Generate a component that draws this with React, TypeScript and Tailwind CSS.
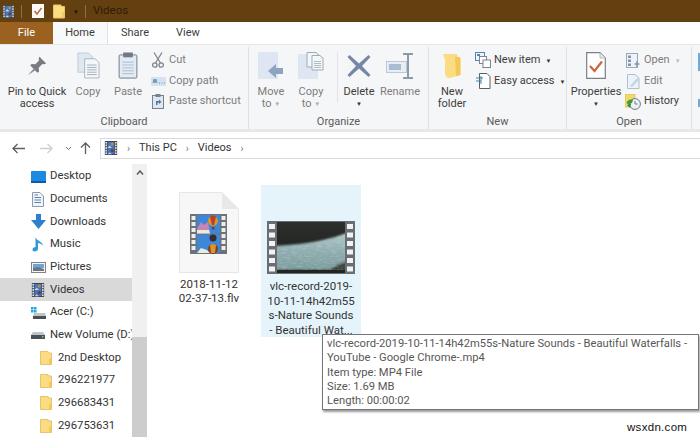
import React from "react";

const FONT = "font-['Roboto','Noto_Sans',sans-serif]";

// film strip icon used for the video library / title bar
function FilmIcon({ size = 16 }: { size?: number }) {
  const holes = [1, 4, 7, 10, 13];
  return (
    <svg width={size} height={size} viewBox="0 0 16 16" className="shrink-0">
      <rect x="1" y="0" width="14" height="16" fill="#3a3f46" />
      {holes.map((y) => (
        <React.Fragment key={y}>
          <rect x="1.6" y={y} width="1.8" height="2" fill="#e4e6e8" />
          <rect x="12.6" y={y} width="1.8" height="2" fill="#e4e6e8" />
        </React.Fragment>
      ))}
      <rect x="4" y="1" width="8" height="7" fill="#3f78c8" />
      <rect x="4" y="8" width="8" height="7" fill="#3f78c8" />
      <circle cx="9.5" cy="3.5" r="1.8" fill="#c98a2e" />
      <circle cx="9.5" cy="11" r="1.8" fill="#7c3a24" />
      <path d="M4 8 L6.5 5 L9 8Z M4 15 L6.5 13 L9 15Z" fill="#d9d2cf" />
    </svg>
  );
}

function FolderIcon({ w = 12, h = 14 }: { w?: number; h?: number }) {
  return (
    <svg width={w} height={h} viewBox="0 0 12 14" className="shrink-0">
      <path d="M0.5 0.5 H8 L8.5 2 H11.5 V13.5 H0.5Z" fill="#fbdc82" stroke="#e7c36a" />
      <path d="M9 8 L11.5 7 V13.5 H9Z" fill="#f2c95c" />
    </svg>
  );
}

function PinIcon() {
  return (
    <svg width="20" height="20" viewBox="0 0 24 24">
      <path d="M15 1 L23 9 L20.5 10 L18.5 9.5 L14 14 L14.5 18.5 L12.5 20 L4 11.5 L5.5 9.5 L10 10 L14.5 5.5 L14 3Z" fill="#777c83" />
      <path d="M8 15 L1 23 L10 17Z" fill="#8d9197" />
    </svg>
  );
}

function CopyIcon() {
  return (
    <svg width="23" height="27" viewBox="0 0 24 28">
      <path d="M1 1 H12 L16 5 V21 H1Z" fill="#dfe8f2" stroke="#bccada" />
      <path d="M8 7 H19 L23 11 V27 H8Z" fill="#f4f7fa" stroke="#a9b3bd" />
      {[13, 15.5, 18, 20.5, 23].map((y) => (
        <rect key={y} x="10.5" y={y} width="10" height="1" fill="#a4aeb9" />
      ))}
    </svg>
  );
}

function PasteIcon() {
  return (
    <svg width="20" height="27" viewBox="0 0 20 28">
      <rect x="0.8" y="3" width="18.4" height="24" rx="1" fill="#e3ebf4" stroke="#6f7a87" />
      <rect x="5" y="0.5" width="10" height="5" fill="#6f7a87" />
      {[10, 13, 16, 19, 22].map((y) => (
        <rect key={y} x="4" y={y} width="12" height="1" fill="#a9bbcf" />
      ))}
    </svg>
  );
}

function CutIcon() {
  return (
    <svg width="12" height="16" viewBox="0 0 12 16" fill="none" stroke="#7f858d" strokeWidth="1.3">
      <path d="M2 0.5 L8.5 11 M10 0.5 L3.5 11" />
      <circle cx="2.8" cy="13" r="2.2" />
      <circle cx="9.2" cy="13" r="2.2" />
    </svg>
  );
}

function CopyPathIcon() {
  return (
    <svg width="15" height="9" viewBox="0 0 15 9">
      <rect width="15" height="9" fill="#d4e2f1" />
      <path d="M2 6 L3 2 L4 6 L5 2 L6 6 M8 6 H9 M10.5 6 H11.5 M13 6 H14" stroke="#6a87a8" strokeWidth="0.9" fill="none" />
    </svg>
  );
}

function PasteShortcutIcon() {
  return (
    <svg width="12" height="15" viewBox="0 0 12 15">
      <rect x="0.5" y="1.5" width="11" height="13" fill="#dfe8f2" stroke="#78828e" />
      <rect x="3.5" y="0" width="5" height="3" fill="#78828e" />
      <path d="M4 11 V7 H7 V5.5 L9.5 8 L7 10 V8.8 H5.5 V11Z" fill="#5d7690" />
    </svg>
  );
}

function MoveToIcon() {
  return (
    <svg width="26" height="28" viewBox="0 0 26 28">
      <rect x="0" y="0" width="20" height="27" fill="#dde6f2" />
      <path d="M10 19 L18 12 V16 H25 V22 H18 V26Z" fill="#8ea3bf" />
    </svg>
  );
}

function CopyToIcon() {
  return (
    <svg width="26" height="28" viewBox="0 0 26 28">
      <rect x="0" y="2" width="20" height="25" fill="#dde6f2" />
      <path d="M9 0.5 H18 L21 3 V15 H9Z" fill="#f4f7fa" stroke="#9faab6" />
      <path d="M14 3.5 H22 L25 6 V18 H14Z" fill="#f4f7fa" stroke="#9faab6" />
      {[9, 11, 13, 15].map((y) => (
        <rect key={y} x="16" y={y} width="7" height="0.8" fill="#9faab6" />
      ))}
    </svg>
  );
}

function DeleteIcon() {
  return (
    <svg width="24" height="24" viewBox="0 0 24 24">
      <path d="M2.5 1 L12 9.5 L21.5 1 L23.5 3 L15 12 L23.5 21 L21.5 23 L12 14.5 L2.5 23 L0.5 21 L9 12 L0.5 3Z" fill="#7487a6" />
    </svg>
  );
}

function RenameIcon() {
  return (
    <svg width="28" height="26" viewBox="0 0 28 26">
      <rect x="0.5" y="8.5" width="20" height="11" fill="#e6edf5" stroke="#bcc8d6" />
      <rect x="3" y="11" width="12" height="6" fill="#a9bcd2" />
      <path d="M17 1 H27 M22 1 V25 M17 25 H27" stroke="#8e9aa8" strokeWidth="2" fill="none" />
    </svg>
  );
}

function NewFolderIcon() {
  return (
    <svg width="18" height="26" viewBox="0 0 18 26">
      <path d="M0 1 H14 L15 5 H18 V22 L7 25 Q2 25 2 20 L2 7Z" fill="#fbdc82" />
      <path d="M12 4 H17 V22 L13 23Z" fill="#f3c75a" />
    </svg>
  );
}

function NewItemIcon() {
  return (
    <svg width="16" height="16" viewBox="0 0 16 16">
      <rect x="0.5" y="0.5" width="9" height="8" fill="#eef4fa" stroke="#4f87b5" />
      <rect x="2" y="2" width="3" height="2" fill="#4f87b5" />
      <rect x="4.5" y="4.5" width="7" height="7" fill="#fff" stroke="#7c848d" />
      <rect x="8" y="8" width="7.5" height="7.5" fill="#fff" stroke="#7c848d" />
    </svg>
  );
}

function EasyAccessIcon() {
  return (
    <svg width="16" height="16" viewBox="0 0 16 16">
      <path d="M4.5 0.5 H12 L15 3.5 V15.5 H4.5Z" fill="#fff" stroke="#5b6067" />
      <path d="M1 5 H8 M1 8 H6" stroke="#3f86b8" strokeWidth="1.2" />
      <path d="M6 3 V11" stroke="#3f86b8" />
    </svg>
  );
}

function PropertiesIcon() {
  return (
    <svg width="20" height="27" viewBox="0 0 20 27">
      <path d="M0.7 0.7 H14 L19.3 6 V26.3 H0.7Z" fill="#fff" stroke="#7b7f85" strokeWidth="1.2" />
      <path d="M14 0.7 V6 H19.3" fill="#e9ecef" stroke="#b3b7bc" />
      <path d="M4 14 L8.5 19 L16 9.5" fill="none" stroke="#c96a3d" strokeWidth="2.2" />
    </svg>
  );
}

function OpenSmallIcon() {
  return (
    <svg width="14" height="15" viewBox="0 0 14 15">
      <rect x="0.5" y="0.5" width="11" height="14" fill="#eef3f8" stroke="#9aa9ba" />
      {[2.5, 6.5, 10.5].map((y) => (
        <rect key={y} x="2" y={y} width="3" height="2.5" fill="#7f96b0" />
      ))}
      <path d="M11 8 V14 M8.5 11 H13.5" stroke="#7f96b0" strokeWidth="1.5" />
    </svg>
  );
}

function EditIcon() {
  return (
    <svg width="13" height="15" viewBox="0 0 13 15">
      <path d="M0.5 0.5 H8 L12 4 V14.5 H0.5Z" fill="#edf3f9" stroke="#b0bfce" />
      <path d="M3 12 L10 4 L12 6 L5 13Z" fill="#c4d4e6" />
    </svg>
  );
}

function HistoryIcon() {
  return (
    <svg width="16" height="16" viewBox="0 0 16 16">
      <rect x="0" y="0" width="10" height="13" fill="#f4d76b" stroke="#d1b14a" strokeWidth="0.6" />
      <circle cx="10" cy="10" r="5.4" fill="#eef1f4" stroke="#737a82" />
      <path d="M10 7 V10 H12.5" stroke="#737a82" fill="none" />
      <path d="M1.5 9 C3 5.5 6 5 8 6 L7 9 L3.5 10.5Z" fill="#39a03a" />
      <path d="M2 11 L6 9.5 L5 14Z" fill="#2f8a30" />
    </svg>
  );
}

function DesktopIcon() {
  return (
    <svg width="15" height="12" viewBox="0 0 15 12">
      <rect width="15" height="11" rx="0.8" fill="#1a8be0" />
      <rect y="10" width="15" height="2" fill="#0e5aa8" />
    </svg>
  );
}
function DocumentsIcon() {
  return (
    <svg width="12" height="15" viewBox="0 0 12 15">
      <path d="M0.5 0.5 H8 L11.5 4 V14.5 H0.5Z" fill="#f1f4f7" stroke="#8f9aa5" />
      <path d="M2.5 3 H6 M2.5 5.5 H9 M2.5 8 H9 M2.5 10.5 H9" stroke="#4e8ac0" />
    </svg>
  );
}
function DownloadsIcon() {
  return (
    <svg width="15" height="15" viewBox="0 0 15 15">
      <path d="M5 0 H10 V6 H15 L7.5 15 L0 6 H5Z" fill="#2f7fd0" />
    </svg>
  );
}
function MusicIcon() {
  return (
    <svg width="12" height="15" viewBox="0 0 12 15">
      <path d="M3.5 0 C4.5 4 10.5 4 11 9 C9.5 6.5 7.5 6.5 6 6 V12 C6 14.5 1 15.5 0.5 13 C0.2 11 2 10 3.5 10Z" fill="#2f9ad8" />
    </svg>
  );
}
function PicturesIcon() {
  return (
    <svg width="15" height="11" viewBox="0 0 15 11">
      <rect x="0.5" y="0.5" width="14" height="10" fill="#f2f4f6" stroke="#7b8490" />
      <rect x="2" y="2" width="11" height="4" fill="#6fa3d2" />
      <path d="M2 9 L2 6 L7 5 L13 7 V9Z" fill="#6b7680" />
    </svg>
  );
}
function AcerDriveIcon() {
  return (
    <svg width="15" height="12" viewBox="0 0 15 12">
      <rect x="0" y="0" width="2.5" height="2.5" fill="#22a7e0" />
      <rect x="3" y="0" width="2.5" height="2.5" fill="#22a7e0" />
      <rect x="0" y="3" width="2.5" height="2.5" fill="#22a7e0" />
      <rect x="3" y="3" width="2.5" height="2.5" fill="#22a7e0" />
      <path d="M3 6 H14 L15 9 H2Z" fill="#bfc4c9" />
      <rect x="2" y="9" width="13" height="3" fill="#4b5057" />
    </svg>
  );
}
function DriveIcon() {
  return (
    <svg width="14" height="7" viewBox="0 0 14 7">
      <path d="M2 0 H12 L14 3 H0Z" fill="#bfc4c9" />
      <rect y="3" width="14" height="4" fill="#4b5057" />
      <rect x="11" y="4" width="1.5" height="1.5" fill="#7fd05a" />
    </svg>
  );
}

function BigFileIcon() {
  return (
    <svg width="60" height="81" viewBox="0 0 60 81">
      <path d="M0.5 0.5 H43 L59.5 17 V80.5 H0.5Z" fill="#f7f7f7" stroke="#e6e6e6" />
      <path d="M43 0.5 V17 H59.5Z" fill="#e8e8e8" />
      <rect x="11" y="22" width="37" height="40" fill="#6d7277" />
      {[24, 30, 36, 42, 48, 54].map((y) => (
        <React.Fragment key={y}>
          <rect x="12.5" y={y} width="4" height="4" fill="#eceeef" />
          <rect x="42.5" y={y} width="4" height="4" fill="#eceeef" />
        </React.Fragment>
      ))}
      <rect x="18" y="23" width="23" height="18.5" fill="#3d86d8" />
      <rect x="18" y="42.5" width="23" height="18.5" fill="#3d86d8" />
      <path d="M18 37 L22 30 L25 33 L29 30 L31 41.5 H18Z" fill="#c785b5" />
      <path d="M18 41.5 V38 L30 38 L31 41.5Z" fill="#e8ecd8" />
      <path d="M18 61 L22 56 L28 58 L31 61Z" fill="#e8ecd8" />
      <circle cx="34" cy="29" r="5" fill="#d9962a" />
      <path d="M31 24.5 A5 5 0 0 1 37 24.5 L35 33 H33Z" fill="#c23a2a" />
      <rect x="33" y="35" width="2.5" height="2.5" fill="#6a4326" />
      <circle cx="34" cy="46" r="3.5" fill="#3b2a30" />
      <circle cx="34" cy="57" r="5" fill="#8b3b1e" />
      <path d="M31 53 A5 5 0 0 1 37 53 L36 61 H32Z" fill="#d9962a" />
    </svg>
  );
}

function VideoThumb() {
  const holes = [3, 11.5, 20, 28.5, 37, 45.5];
  const waterEdge = "M8 25 C26 24 44 22 56 19 C64 17 72 15 80 12 V49 H8Z";
  return (
    <svg width="88" height="53" viewBox="0 0 88 53">
      <defs>
        <linearGradient id="water" x1="0" y1="0" x2="0" y2="1">
          <stop offset="0" stopColor="#b2c8c8" />
          <stop offset="0.5" stopColor="#8fadaf" />
          <stop offset="1" stopColor="#7d9c9e" />
        </linearGradient>
        <linearGradient id="bank" x1="0" y1="0" x2="0" y2="1">
          <stop offset="0" stopColor="#2c2f2c" />
          <stop offset="1" stopColor="#191b19" />
        </linearGradient>
        <filter id="soft">
          <feGaussianBlur stdDeviation="0.8" />
        </filter>
        <filter id="grain" x="0" y="0" width="100%" height="100%">
          <feTurbulence type="fractalNoise" baseFrequency="0.2 0.6" numOctaves="3" seed="4" />
          <feColorMatrix values="0 0 0 0 0.95  0 0 0 0 0.98  0 0 0 0 0.98  0 0 0 1.6 -0.7" />
        </filter>
        <clipPath id="frame">
          <rect x="10" y="1" width="68" height="51" />
        </clipPath>
        <clipPath id="waterClip">
          <path d={waterEdge} />
        </clipPath>
      </defs>
      <rect width="88" height="53" fill="#6a6e72" />
      <rect x="10" y="1" width="68" height="51" fill="url(#bank)" />
      <g clipPath="url(#frame)">
        <g filter="url(#soft)">
          <path d={waterEdge} fill="url(#water)" />
          <path d="M62 50 C66 45 72 43 80 40 V54 H60Z" fill="#2b3128" opacity="0.8" />
        </g>
        <g clipPath="url(#waterClip)">
          <rect x="8" y="10" width="72" height="40" filter="url(#grain)" opacity="0.3" />
        </g>
        <rect x="10" y="49" width="68" height="3" fill="#20261f" />
      </g>
      {holes.map((y) => (
        <React.Fragment key={y}>
          <rect x="2" y={y} width="6" height="5" fill="#f0f2f3" />
          <rect x="80" y={y} width="6" height="5" fill="#f0f2f3" />
        </React.Fragment>
      ))}
    </svg>
  );
}

function Big({
  w,
  icon,
  lines,
  muted,
  caret,
}: {
  w: string;
  icon: React.ReactNode;
  lines: React.ReactNode[];
  muted?: boolean;
  caret?: boolean;
}) {
  return (
    <div className={`flex flex-col items-center shrink-0 ${w}`}>
      <div className="h-[31px] mb-[4.5px] flex items-center justify-center">{icon}</div>
      <div className={`text-[11px] leading-[12.5px] text-center whitespace-nowrap ${muted ? "text-[#7d7d7d]" : "text-[#3d3d3d]"}`}>
        {lines.map((l, i) => (
          <div key={i}>{l}</div>
        ))}
        {caret && <div className="text-[6px] leading-[12px] text-[#333]">▼</div>}
      </div>
    </div>
  );
}

function Small({ icon, label, muted, caret }: { icon: React.ReactNode; label: string; muted?: boolean; caret?: boolean }) {
  return (
    <div className={`flex items-center gap-[3px] h-[20.7px] text-[11px] whitespace-nowrap ${muted ? "text-[#7d7d7d]" : "text-[#3d3d3d]"}`}>
      <div className="w-[16px] flex justify-center shrink-0">{icon}</div>
      <span>{label}</span>
      {caret && <span className={`text-[6px] ml-[2px] ${muted ? "text-[#bbb]" : "text-[#333]"}`}>▼</span>}
    </div>
  );
}

function Group({ w, label, children }: { w: string; label: string; children: React.ReactNode }) {
  return (
    <div className={`flex flex-col shrink-0 border-r border-[#dfe1e3] ${w}`}>
      <div className="flex h-[69px] pt-[3px]">{children}</div>
      <div className="text-[11px] leading-[14px] text-center text-[#5a5a5a]">{label}</div>
    </div>
  );
}

const NAV: { icon: React.ReactNode; label: string; active?: boolean; sub?: boolean }[] = [
  { icon: <DesktopIcon />, label: "Desktop" },
  { icon: <DocumentsIcon />, label: "Documents" },
  { icon: <DownloadsIcon />, label: "Downloads" },
  { icon: <MusicIcon />, label: "Music" },
  { icon: <PicturesIcon />, label: "Pictures" },
  { icon: <FilmIcon size={14} />, label: "Videos", active: true },
  { icon: <AcerDriveIcon />, label: "Acer (C:)" },
  { icon: <DriveIcon />, label: "New Volume (D:)" },
  { icon: <FolderIcon />, label: "2nd Desktop", sub: true },
  { icon: <FolderIcon />, label: "296221977", sub: true },
  { icon: <FolderIcon />, label: "296683431", sub: true },
  { icon: <FolderIcon />, label: "296753631", sub: true },
];

const ToCaret = (
  <>
    to <span className="text-[6px] align-middle text-[#aaa]">▼</span>
  </>
);

export default function App() {
  return (
    <div className={`relative w-[700px] h-[437px] overflow-hidden bg-white flex flex-col ${FONT}`}>
      {/* title bar */}
      <div className="h-[22px] bg-[#644010] flex items-center pl-[2px] shrink-0 text-[11.5px] text-[#2e1c06]">
        <FilmIcon size={13} />
        <div className="ml-[6px] w-px h-[13px] bg-[#8d7048]" />
        <svg width="12" height="14" viewBox="0 0 12 14" className="ml-[10px]">
          <rect width="12" height="14" fill="#fbfbfb" />
          <path d="M2.5 7 L5 10 L9.5 4" stroke="#d0603a" strokeWidth="1.5" fill="none" />
        </svg>
        <div className="ml-[9px]"><FolderIcon w={12} h={15} /></div>
        <div className="text-[6px] text-[#1e1407] ml-[8px]">▼</div>
        <div className="ml-[6px] w-px h-[13px] bg-[#8d7048]" />
        <span className="ml-[7px]">Videos</span>
      </div>

      {/* tabs */}
      <div className="h-[22px] flex shrink-0 text-[11px] text-[#3d3d3d]">
        <div className="w-[53px] pt-[1px] bg-[#9b6120] text-white flex items-center justify-center">File</div>
        <div className="w-[55px] pt-[1px] border-r border-[#dfe1e3] bg-[#f8f9fa] flex items-center justify-center">Home</div>
        <div className="w-[54px] pt-[1px] flex items-center justify-center">Share</div>
        <div className="w-[52px] pt-[1px] flex items-center justify-center">View</div>
      </div>

      {/* ribbon */}
      <div className="h-[88px] shrink-0 bg-[#f5f6f7] border-t border-[#e5e6e8] border-b-[3px] border-b-[#e6e8ea] flex pt-[2px]">
        <Group w="w-[249px]" label="Clipboard">
          <Big w="w-[74px]" icon={<PinIcon />} lines={["Pin to Quick", "access"]} />
          <Big w="w-[28px]" icon={<CopyIcon />} lines={["Copy"]} muted />
          <Big w="w-[52px]" icon={<PasteIcon />} lines={["Paste"]} muted />
          <div className="flex flex-col -ml-[4px]">
            <Small icon={<CutIcon />} label="Cut" muted />
            <Small icon={<CopyPathIcon />} label="Copy path" muted />
            <Small icon={<PasteShortcutIcon />} label="Paste shortcut" muted />
          </div>
        </Group>
        <Group w="w-[180px]" label="Organize">
          <div className="w-[2px]" />
          <Big w="w-[40px]" icon={<MoveToIcon />} lines={["Move", ToCaret]} muted />
          <Big w="w-[40px]" icon={<CopyToIcon />} lines={["Copy", ToCaret]} muted />
          <div className="w-[6px]" />
          <div className="w-px h-[50px] mt-[2px] bg-[#e1e3e5]" />
          <Big w="w-[42px]" icon={<DeleteIcon />} lines={["Delete"]} caret />
          <Big w="w-[40px]" icon={<RenameIcon />} lines={["Rename"]} muted />
        </Group>
        <Group w="w-[138px]" label="New">
          <Big w="w-[46px]" icon={<NewFolderIcon />} lines={["New", "folder"]} />
          <div className="flex flex-col">
            <Small icon={<NewItemIcon />} label="New item" caret />
            <Small icon={<EasyAccessIcon />} label="Easy access" caret />
          </div>
        </Group>
        <Group w="w-[125px]" label="Open">
          <Big w="w-[58px]" icon={<PropertiesIcon />} lines={["Properties"]} caret />
          <div className="flex flex-col">
            <Small icon={<OpenSmallIcon />} label="Open" muted caret />
            <Small icon={<EditIcon />} label="Edit" muted />
            <Small icon={<HistoryIcon />} label="History" />
          </div>
        </Group>
        <div className="ml-[6px] flex flex-col gap-[28px] pt-[6px]">
          <div className="w-[2px] h-[18px] bg-[#6ea9d8]" />
          <div className="w-[2px] h-[8px] bg-[#6ea9d8]" />
        </div>
      </div>

      {/* address row */}
      <div className="h-[32px] shrink-0 flex items-center text-[#555]">
        <div className="w-[100px] flex items-center shrink-0 pl-[12px]">
          <svg width="13" height="11" viewBox="0 0 13 11" fill="none" stroke="#5f5f5f" strokeWidth="1.3">
            <path d="M13 5.5 H1 M5.5 1 L1 5.5 L5.5 10" />
          </svg>
          <svg width="13" height="11" viewBox="0 0 13 11" fill="none" stroke="#cfcfcf" strokeWidth="1.3" className="ml-[15px]">
            <path d="M0 5.5 H12 M7.5 1 L12 5.5 L7.5 10" />
          </svg>
          <svg width="7" height="5" viewBox="0 0 7 5" fill="none" stroke="#777" className="ml-[12px]">
            <path d="M1 1 L3.5 3.5 L6 1" />
          </svg>
          <svg width="11" height="12" viewBox="0 0 11 12" fill="none" stroke="#5f5f5f" strokeWidth="1.3" className="ml-[8px]">
            <path d="M5.5 12 V1 M1 5.5 L5.5 1 L10 5.5" />
          </svg>
        </div>
        <div className="flex-1 h-[21px] border border-[#d9d9d9] border-r-0 flex items-center pl-[3px] text-[11px] text-[#333]">
          <FilmIcon size={14} />
          <span className="ml-[9px] mr-[9px] text-[10px] text-[#777]">›</span>
          <span>This PC</span>
          <span className="mx-[9px] text-[10px] text-[#777]">›</span>
          <span>Videos</span>
          <span className="mx-[9px] text-[10px] text-[#777]">›</span>
        </div>
      </div>

      {/* body */}
      <div className="flex-1 flex min-h-0">
        <div className="w-[132px] shrink-0 pt-[0.5px] overflow-hidden">
          {NAV.map((n) => (
            <div
              key={n.label}
              className={`h-[22.7px] pt-[1.5px] flex items-center whitespace-nowrap text-[11.3px] text-[#333] ${n.active ? "bg-[#d9d9d9]" : ""} ${n.sub ? "pl-[40px] gap-[6px]" : "pl-[30px] gap-[4px]"}`}
            >
              <div className={`flex justify-center shrink-0 ${n.sub ? "w-[12px]" : "w-[16px]"}`}>{n.icon}</div>
              <span>{n.label}</span>
            </div>
          ))}
        </div>
        <div className="w-[15px] shrink-0 bg-[#f0f0f0] flex flex-col">
          <div className="h-[173px] pt-[6px] flex justify-center">
            <svg width="8" height="5" viewBox="0 0 8 5" fill="none" stroke="#555" strokeWidth="1.4">
              <path d="M1 4.5 L4 1 L7 4.5" />
            </svg>
          </div>
          <div className="flex-1 bg-[#cdcdcd]" />
        </div>
        <div className="flex-1 flex items-start pt-[21px] pl-[12px] gap-[2px]">
          <div className="w-[100px] flex flex-col items-center pt-[7px] text-[11.5px] leading-[13.5px] text-[#333] text-center">
            <BigFileIcon />
            <div className="mt-[5px]">2018-11-12</div>
            <div>02-37-13.flv</div>
          </div>
          <div className="w-[100px] h-[152px] bg-[#e5f3fb] flex flex-col items-center pt-[36px] text-[11.5px] leading-[14.5px] text-[#333] text-center">
            <VideoThumb />
            <div className="mt-[5px] whitespace-nowrap">vlc-record-2019-</div>
            <div className="whitespace-nowrap">10-11-14h42m55</div>
            <div className="whitespace-nowrap">s-Nature Sounds</div>
            <div className="whitespace-nowrap">- Beautiful Wat...</div>
          </div>
        </div>
      </div>

      {/* tooltip */}
      <div className="absolute left-[322px] top-[334px] w-[377px] h-[76px] bg-white border border-[#767676] shadow-[1px_2px_2px_rgba(0,0,0,0.4)] px-[4px] pt-[2px] text-[11.2px] leading-[14.3px] text-[#575757] whitespace-nowrap">
        <div>vlc-record-2019-10-11-14h42m55s-Nature Sounds - Beautiful Waterfalls -</div>
        <div>YouTube - Google Chrome-.mp4</div>
        <div>Item type: MP4 File</div>
        <div>Size: 1.69 MB</div>
        <div>Length: 00:00:02</div>
      </div>

      {/* watermark */}
      <div className="absolute left-[627px] top-[420px] text-[11.5px] leading-[14px] tracking-[0.3px] text-[#111] font-['Liberation_Sans',sans-serif]">wsxdn.com</div>
    </div>
  );
}
